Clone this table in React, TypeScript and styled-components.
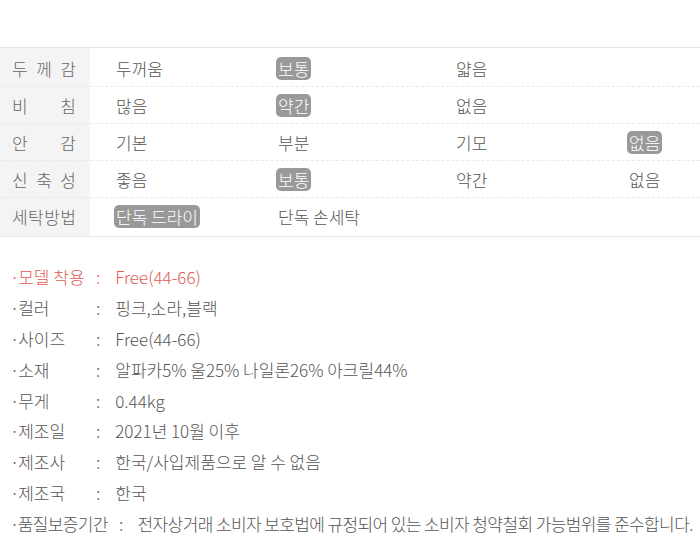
import * as React from 'react';
import styled, { createGlobalStyle } from 'styled-components';

const GlobalStyle = createGlobalStyle`
    html, body {
        margin: 0;
        padding: 0;
        background: #fff;
    }
    body {
        font-family: 'Noto Sans CJK KR', 'Noto Sans', sans-serif;
        font-weight: 300;
        color: #555;
    }
`;

type Option = { text: string; on?: boolean };
type SpecRow = { label: string; options: Option[] };

const specRows: SpecRow[] = [
    { label: '두께감', options: [{ text: '두꺼움' }, { text: '보통', on: true }, { text: '얇음' }] },
    { label: '비침', options: [{ text: '많음' }, { text: '약간', on: true }, { text: '없음' }] },
    { label: '안감', options: [{ text: '기본' }, { text: '부분' }, { text: '기모' }, { text: '없음', on: true }] },
    { label: '신축성', options: [{ text: '좋음' }, { text: '보통', on: true }, { text: '약간' }, { text: '없음' }] },
    { label: '세탁방법', options: [{ text: '단독 드라이', on: true }, { text: '단독 손세탁' }] },
];

const infoRows: { label: string; value: string; accent?: boolean; long?: boolean }[] = [
    { label: '모델 착용', value: 'Free(44-66)', accent: true },
    { label: '컬러', value: '핑크,소라,블랙' },
    { label: '사이즈', value: 'Free(44-66)' },
    { label: '소재', value: '알파카5% 울25% 나일론26% 아크릴44%' },
    { label: '무게', value: '0.44kg' },
    { label: '제조일', value: '2021년 10월 이후' },
    { label: '제조사', value: '한국/사입제품으로 알 수 없음' },
    { label: '제조국', value: '한국' },
    {
        label: '품질보증기간',
        value: '전자상거래 소비자 보호법에 규정되어 있는 소비자 청약철회 가능범위를 준수합니다.',
        long: true,
    },
];

export default function App() {
    return (
        <Page>
            <GlobalStyle />
            <SpecTable>
                {specRows.map(row => (
                    <Row key={row.label}>
                        {/* short labels are spread over the whole label cell */}
                        <Label>
                            {row.label.split('').map((ch, i) => (
                                <span key={i}>{ch}</span>
                            ))}
                        </Label>
                        {row.options.map((opt, i) => (
                            <Cell key={i}>
                                <Chip $on={!!opt.on}>{opt.text}</Chip>
                            </Cell>
                        ))}
                    </Row>
                ))}
            </SpecTable>
            <InfoList>
                {infoRows.map(item => (
                    <InfoItem key={item.label} $accent={!!item.accent} $long={!!item.long}>
                        <InfoLabel>
                            <Dot>·</Dot>
                            {item.label}
                        </InfoLabel>
                        <Colon $long={!!item.long}>:</Colon>
                        <span>{item.value}</span>
                    </InfoItem>
                ))}
            </InfoList>
        </Page>
    );
}

const Page = styled.div`
    width: 700px;
    padding-top: 47px;
`;

const SpecTable = styled.div`
    border-top: 1px solid #e6e6e6;
    border-bottom: 1px solid #e6e6e6;
    background: linear-gradient(to right, #f4f4f4 90px, #fff 90px);
    padding: 2px 0;
`;

const Row = styled.div`
    display: grid;
    grid-template-columns: 90px 162px 178px 173px 1fr;
    height: 36px;
    & + & {
        border-top: 1px dashed #e8e8e8;
    }
`;

const Label = styled.div`
    display: flex;
    align-items: center;
    justify-content: space-between;
    padding: 0 14px 0 12px;
    font-size: 17px;
    color: #666;
`;

const Cell = styled.div`
    display: flex;
    align-items: center;
    padding-left: 24px;
`;

const Chip = styled.span<{ $on: boolean }>`
    display: inline-block;
    padding: 0 2px;
    line-height: 23px;
    font-size: 17px;
    border-radius: 5px;
    color: ${({ $on }) => ($on ? '#fff' : '#555')};
    background: ${({ $on }) => ($on ? '#999' : 'transparent')};
`;

const InfoList = styled.div`
    padding: 24px 0 0 10px;
`;

const InfoItem = styled.div<{ $accent: boolean; $long: boolean }>`
    display: flex;
    align-items: center;
    height: 30.9px;
    font-size: 17px;
    letter-spacing: ${({ $long }) => ($long ? '-0.6px' : '0')};
    white-space: nowrap;
    color: ${({ $accent }) => ($accent ? '#de5a57' : '#555')};
`;

const InfoLabel = styled.span`
    min-width: 80px;
`;

const Dot = styled.span`
    margin-right: -1px;
`;

const Colon = styled.span<{ $long: boolean }>`
    margin: 0 15px 0 ${({ $long }) => ($long ? '11px' : '6px')};
`;
